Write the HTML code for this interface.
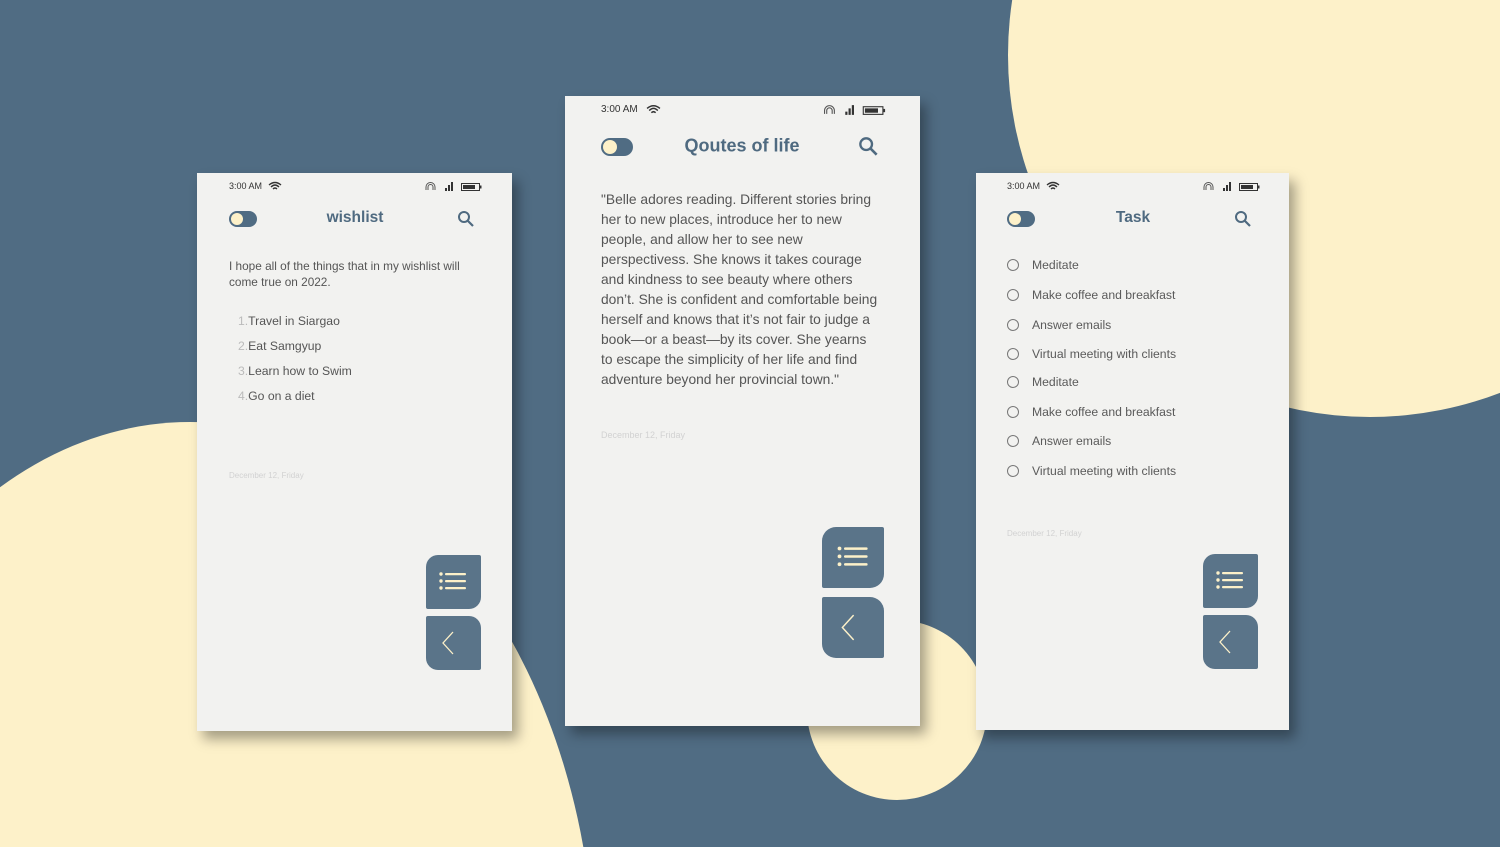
<!DOCTYPE html>
<html style="overflow:hidden;width:1500px;height:847px"><head><meta charset="utf-8"><style>
*{margin:0;padding:0;box-sizing:border-box}
html,body{width:1500px;height:847px;overflow:hidden}
body{background:#506c83;position:relative;font-family:"Liberation Sans",sans-serif;color:#5a5a5a}
#w{position:absolute;left:0;top:0;width:1500px;height:847px;overflow:hidden}
.ph{position:absolute;background:#f2f2f0;box-shadow:6px 8px 12px rgba(0,0,0,.35)}
.a{position:absolute;white-space:nowrap}
.st{font-size:9px;color:#333}
.tg{position:absolute;border-radius:10px;background:#506c83}
.tg i{position:absolute;left:2px;top:2px;border-radius:50%;background:#fdf1c9}
.tt{font-weight:bold;color:#4f6a80;transform:translate(-50%,-50%)}
.btn{position:absolute;background:#5a7489}
.dt{color:#d2d2d2}
.ck{position:absolute;width:12px;height:12px;border:1.3px solid #777;border-radius:50%}
.tk{font-size:12.2px}
</style></head><body><div id="w">
<svg class="a" style="left:0;top:0" width="1500" height="847" viewBox="0 0 1500 847"><g fill="#fdf1c9"><circle cx="1370" cy="55" r="362"/><ellipse cx="190" cy="980" rx="405" ry="558"/><circle cx="897" cy="710" r="90"/></g></svg>

<!-- LEFT PHONE -->
<div class="ph" style="left:197px;top:173px;width:315px;height:558px"></div>
<div class="a st" style="left:229px;top:181px">3:00 AM</div>
<svg class="a" style="left:268px;top:181px" width="14" height="10" viewBox="0 0 14 10"><path d="M1 4Q7-1 13 4M3 6Q7 2 11 6M5 8Q7 6 9 8" stroke="#333" stroke-width="1.4" fill="none"/></svg>
<svg class="a" style="left:424px;top:181px" width="58" height="11" viewBox="0 0 58 11"><path d="M2 9V6a4 4 0 0 1 9 0v3M4 9V6a2 2 0 0 1 5 0v3" stroke="#555" fill="none"/><path d="M21 10h2V7h-2zM24 10h2V4h-2zM27 10h2V1h-2z" fill="#333"/><rect x="37.5" y="2.5" width="18" height="7" fill="none" stroke="#333"/><rect x="39" y="4" width="12" height="4" fill="#333"/><rect x="56" y="4.5" width="1.5" height="3" fill="#333"/></svg>
<div class="tg" style="left:229px;top:211px;width:28px;height:16px"><i style="width:12px;height:12px"></i></div>
<div class="a tt" style="left:355px;top:218px;font-size:15.5px">wishlist</div>
<svg class="a" style="left:457px;top:210px" width="18" height="18" viewBox="0 0 18 18"><circle cx="7" cy="7" r="5" stroke="#4f6a80" stroke-width="2" fill="none"/><path d="M11 11l5 5" stroke="#4f6a80" stroke-width="2.2"/></svg>
<div class="a" style="left:229px;top:258px;font-size:11.8px;line-height:16px;color:#555">I hope all of the things that in my wishlist will<br>come true on 2022.</div>
<div class="a" style="left:238px;top:309px;font-size:12.2px;line-height:25px;color:#555"><span style="color:#bbb">1.</span>Travel in Siargao<br><span style="color:#bbb">2.</span>Eat Samgyup<br><span style="color:#bbb">3.</span>Learn how to Swim<br><span style="color:#bbb">4.</span>Go on a diet</div>
<div class="a dt" style="left:229px;top:471px;font-size:8px">December 12, Friday</div>
<div class="btn" style="left:426px;top:555px;width:55px;height:54px;border-radius:12px 2px 12px 2px"></div>
<div class="btn" style="left:426px;top:616px;width:55px;height:54px;border-radius:2px 12px 2px 12px"></div>
<svg class="a" style="left:438px;top:570px" width="30" height="24" viewBox="0 0 30 24"><g fill="#fdf1c9"><circle cx="3" cy="4" r="1.7"/><circle cx="3" cy="11" r="1.7"/><circle cx="3" cy="18" r="1.7"/><rect x="7" y="3" width="21" height="2.2" rx="1"/><rect x="7" y="10" width="21" height="2.2" rx="1"/><rect x="7" y="17" width="21" height="2.2" rx="1"/></g></svg>
<svg class="a" style="left:440px;top:631px" width="16" height="24" viewBox="0 0 16 24"><path d="M13 1L3 12l10 11" stroke="#fdf1c9" stroke-width="1.3" fill="none"/></svg>

<!-- MIDDLE PHONE -->
<div class="ph" style="left:565px;top:96px;width:355px;height:630px"></div>
<div class="a st" style="left:601px;top:104px;font-size:10px">3:00 AM</div>
<svg class="a" style="left:646px;top:104px" width="15" height="11" viewBox="0 0 14 10"><path d="M1 4Q7-1 13 4M3 6Q7 2 11 6M5 8Q7 6 9 8" stroke="#333" stroke-width="1.4" fill="none"/></svg>
<svg class="a" style="left:821px;top:104px" width="66" height="12" viewBox="0 0 58 11"><path d="M2 9V6a4 4 0 0 1 9 0v3M4 9V6a2 2 0 0 1 5 0v3" stroke="#555" fill="none"/><path d="M21 10h2V7h-2zM24 10h2V4h-2zM27 10h2V1h-2z" fill="#333"/><rect x="37.5" y="2.5" width="18" height="7" fill="none" stroke="#333"/><rect x="39" y="4" width="12" height="4" fill="#333"/><rect x="56" y="4.5" width="1.5" height="3" fill="#333"/></svg>
<div class="tg" style="left:601px;top:138px;width:32px;height:18px"><i style="width:14px;height:14px"></i></div>
<div class="a tt" style="left:742px;top:146px;font-size:18px">Qoutes of life</div>
<svg class="a" style="left:858px;top:136px" width="21" height="21" viewBox="0 0 18 18"><circle cx="7" cy="7" r="5" stroke="#4f6a80" stroke-width="2" fill="none"/><path d="M11 11l5 5" stroke="#4f6a80" stroke-width="2.2"/></svg>
<div class="a" style="left:601px;top:190px;font-size:13.8px;line-height:20px;color:#555">"Belle adores reading. Different stories bring<br>her to new places, introduce her to new<br>people, and allow her to see new<br>perspectivess. She knows it takes courage<br>and kindness to see beauty where others<br>don’t. She is confident and comfortable being<br>herself and knows that it’s not fair to judge a<br>book—or a beast—by its cover. She yearns<br>to escape the simplicity of her life and find<br>adventure beyond her provincial town."</div>
<div class="a dt" style="left:601px;top:430px;font-size:9px">December 12, Friday</div>
<div class="btn" style="left:822px;top:527px;width:62px;height:61px;border-radius:14px 2px 14px 2px"></div>
<div class="btn" style="left:822px;top:597px;width:62px;height:61px;border-radius:2px 14px 2px 14px"></div>
<svg class="a" style="left:836px;top:544px" width="34" height="27" viewBox="0 0 30 24"><g fill="#fdf1c9"><circle cx="3" cy="4" r="1.7"/><circle cx="3" cy="11" r="1.7"/><circle cx="3" cy="18" r="1.7"/><rect x="7" y="3" width="21" height="2.2" rx="1"/><rect x="7" y="10" width="21" height="2.2" rx="1"/><rect x="7" y="17" width="21" height="2.2" rx="1"/></g></svg>
<svg class="a" style="left:839px;top:614px" width="18" height="27" viewBox="0 0 16 24"><path d="M13 1L3 12l10 11" stroke="#fdf1c9" stroke-width="1.3" fill="none"/></svg>

<!-- RIGHT PHONE -->
<div class="ph" style="left:976px;top:173px;width:313px;height:557px"></div>
<div class="a st" style="left:1007px;top:181px">3:00 AM</div>
<svg class="a" style="left:1046px;top:181px" width="14" height="10" viewBox="0 0 14 10"><path d="M1 4Q7-1 13 4M3 6Q7 2 11 6M5 8Q7 6 9 8" stroke="#333" stroke-width="1.4" fill="none"/></svg>
<svg class="a" style="left:1202px;top:181px" width="58" height="11" viewBox="0 0 58 11"><path d="M2 9V6a4 4 0 0 1 9 0v3M4 9V6a2 2 0 0 1 5 0v3" stroke="#555" fill="none"/><path d="M21 10h2V7h-2zM24 10h2V4h-2zM27 10h2V1h-2z" fill="#333"/><rect x="37.5" y="2.5" width="18" height="7" fill="none" stroke="#333"/><rect x="39" y="4" width="12" height="4" fill="#333"/><rect x="56" y="4.5" width="1.5" height="3" fill="#333"/></svg>
<div class="tg" style="left:1007px;top:211px;width:28px;height:16px"><i style="width:12px;height:12px"></i></div>
<div class="a tt" style="left:1133px;top:218px;font-size:15.5px">Task</div>
<svg class="a" style="left:1234px;top:210px" width="18" height="18" viewBox="0 0 18 18"><circle cx="7" cy="7" r="5" stroke="#4f6a80" stroke-width="2" fill="none"/><path d="M11 11l5 5" stroke="#4f6a80" stroke-width="2.2"/></svg>
<div class="ck" style="left:1007px;top:259px"></div><div class="a tk" style="left:1032px;top:258px">Meditate</div>
<div class="ck" style="left:1007px;top:289px"></div><div class="a tk" style="left:1032px;top:288px">Make coffee and breakfast</div>
<div class="ck" style="left:1007px;top:319px"></div><div class="a tk" style="left:1032px;top:318px">Answer emails</div>
<div class="ck" style="left:1007px;top:348px"></div><div class="a tk" style="left:1032px;top:347px">Virtual meeting with clients</div>
<div class="ck" style="left:1007px;top:376px"></div><div class="a tk" style="left:1032px;top:375px">Meditate</div>
<div class="ck" style="left:1007px;top:406px"></div><div class="a tk" style="left:1032px;top:405px">Make coffee and breakfast</div>
<div class="ck" style="left:1007px;top:435px"></div><div class="a tk" style="left:1032px;top:434px">Answer emails</div>
<div class="ck" style="left:1007px;top:465px"></div><div class="a tk" style="left:1032px;top:464px">Virtual meeting with clients</div>
<div class="a dt" style="left:1007px;top:529px;font-size:8px">December 12, Friday</div>
<div class="btn" style="left:1203px;top:554px;width:55px;height:54px;border-radius:12px 2px 12px 2px"></div>
<div class="btn" style="left:1203px;top:615px;width:55px;height:54px;border-radius:2px 12px 2px 12px"></div>
<svg class="a" style="left:1215px;top:569px" width="30" height="24" viewBox="0 0 30 24"><g fill="#fdf1c9"><circle cx="3" cy="4" r="1.7"/><circle cx="3" cy="11" r="1.7"/><circle cx="3" cy="18" r="1.7"/><rect x="7" y="3" width="21" height="2.2" rx="1"/><rect x="7" y="10" width="21" height="2.2" rx="1"/><rect x="7" y="17" width="21" height="2.2" rx="1"/></g></svg>
<svg class="a" style="left:1217px;top:630px" width="16" height="24" viewBox="0 0 16 24"><path d="M13 1L3 12l10 11" stroke="#fdf1c9" stroke-width="1.3" fill="none"/></svg>
</div></body></html>
